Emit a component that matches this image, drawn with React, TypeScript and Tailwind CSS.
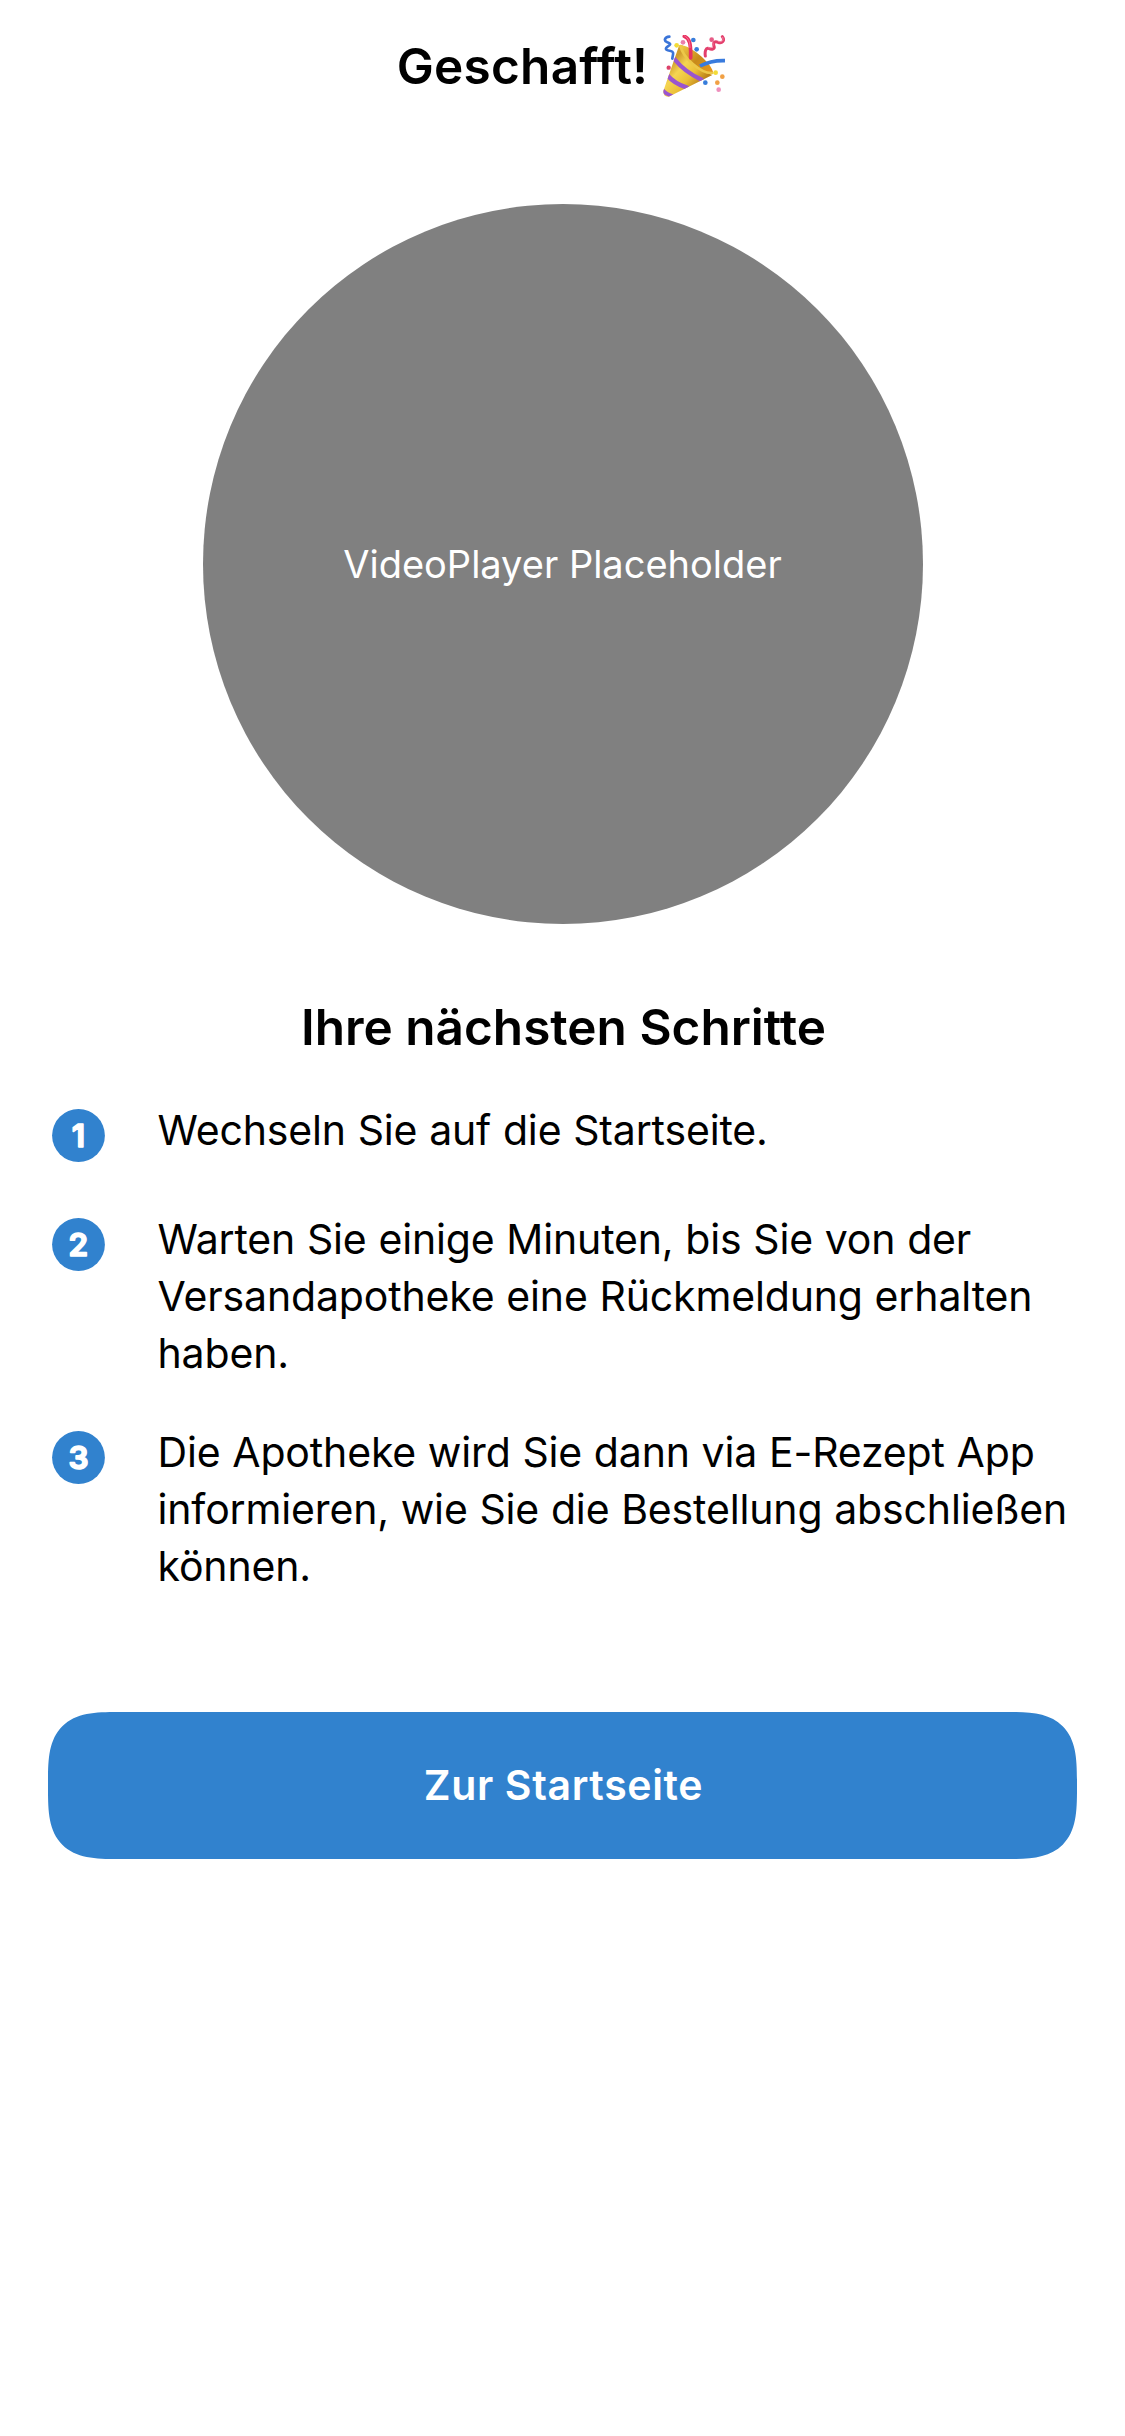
import type { ReactNode } from "react";

function PartyPopper() {
  return (
    <svg viewBox="0 0 186 186" className="size-[62px] shrink-0" fill="none" strokeLinecap="round" role="img" aria-label="Konfetti">
      <defs>
        <linearGradient id="cone" x1="20" y1="90" x2="100" y2="160" gradientUnits="userSpaceOnUse">
          <stop offset="0" stopColor="#cf9c2c" />
          <stop offset="0.3" stopColor="#f5d552" />
          <stop offset="0.65" stopColor="#ebbf38" />
          <stop offset="1" stopColor="#bd8218" />
        </linearGradient>
        <linearGradient id="mouth" x1="60" y1="30" x2="145" y2="115" gradientUnits="userSpaceOnUse">
          <stop offset="0" stopColor="#efc846" />
          <stop offset="0.5" stopColor="#c78a1a" />
          <stop offset="1" stopColor="#e8961c" />
        </linearGradient>
        <clipPath id="coneClip">
          <path d="M48 32 L1 168 Q0 186 17 185 L148 120 Q80 95 58 30 Z" />
        </clipPath>
      </defs>
      <g clipPath="url(#coneClip)">
        <path d="M0 20 H160 V186 H0 Z" fill="url(#cone)" />
        <path d="M34 72 Q66 112 116 134" stroke="#9a55cf" strokeWidth="13" />
        <path d="M12 120 Q34 146 72 158" stroke="#9a55cf" strokeWidth="13" />
        <path d="M-2 164 Q8 178 26 182" stroke="#9a55cf" strokeWidth="11" />
      </g>
      <path d="M50 31 C72 24 142 78 150 110 C152 123 126 119 103 99 C78 79 52 50 50 31 Z" fill="url(#mouth)" />
      <path d="M52 33 C60 67 112 116 148 114" stroke="#edc849" strokeWidth="8" />
      <path d="M19 5 C5 6 1 17 13 22 C27 27 21 30 12 36 C4 44 12 46 23 48 C35 50 29 60 28 71" stroke="#3a74d8" strokeWidth="8" />
      <path d="M64 4 C80 10 84 26 83 69" stroke="#e8325f" strokeWidth="11" />
      <path d="M65 3 C77 9 81 22 81 38" stroke="#f5709a" strokeWidth="3" />
      <path d="M178 5 C187 17 177 27 165 22 C155 18 149 23 153 33 C157 44 145 44 137 40 C128 37 125 50 127 63" stroke="#e33f6c" strokeWidth="9" />
      <path d="M179 7 C183 17 177 23 166 19 M150 24 C151 38 145 39 137 38" stroke="#f890ae" strokeWidth="2.5" />
      <path d="M111 93 C132 82 154 76 186 77" stroke="#397bdd" strokeWidth="11" strokeLinecap="butt" />
      <circle cx="41" cy="31" r="7" fill="#f3dc38" />
      <circle cx="60" cy="22" r="7" fill="#ec7fab" />
      <circle cx="91" cy="15" r="7" fill="#377ddb" />
      <circle cx="101" cy="43" r="7" fill="#377ddb" />
      <circle cx="146" cy="14" r="7" fill="#e65b86" />
      <circle cx="17" cy="98" r="6.5" fill="#dc416a" />
      <circle cx="158" cy="113" r="7" fill="#f3dc38" />
      <circle cx="178" cy="125" r="7" fill="#f1a044" />
      <circle cx="163" cy="143" r="7" fill="#f1a044" />
      <circle cx="127" cy="143" r="7" fill="#377ddb" />
      <circle cx="167" cy="164" r="7" fill="#ee8fbd" />
    </svg>
  );
}

function NumberBadge({ value }: { value: number }) {
  return (
    <svg viewBox="0 0 53 53" className="mt-[7px] size-[53px] shrink-0">
      <circle cx="26.5" cy="26.5" r="26.4" fill="#3182ce" />
      <text
        x="26.4"
        y="37.7"
        textAnchor="middle"
        fill="#fff"
        stroke="#fff"
        strokeWidth="1.6"
        strokeLinejoin="round"
        className="font-['Inter',sans-serif] text-[31.5px] font-semibold"
      >
        {value}
      </text>
    </svg>
  );
}

function Step({ value, children }: { value: number; children: ReactNode }) {
  return (
    <li className="flex min-h-[67px] items-start gap-[52.5px]">
      <NumberBadge value={value} />
      <p className="text-[41px] leading-[57px] tracking-[-0.15px] whitespace-nowrap [word-spacing:0.4px]">{children}</p>
    </li>
  );
}

export default function App() {
  return (
    <main className="flex min-h-[2436px] w-[1125px] flex-col bg-white font-['Inter',sans-serif] text-black">
      <header className="mt-9 flex h-[60px] items-start justify-center gap-[15px] pr-[3px]">
        <h1 className="text-[49.5px] leading-[60px] font-semibold tracking-[0.25px]">Geschafft!</h1>
        <div className="-mt-px">
          <PartyPopper />
        </div>
      </header>

      <div className="mt-[108px] flex size-[720px] items-center justify-center self-center rounded-full bg-[#808080]">
        <span className="text-[38px] text-white">VideoPlayer Placeholder</span>
      </div>

      <h2 className="mt-[73px] pl-[2px] text-center text-[49.5px] leading-[60px] font-semibold">Ihre nächsten Schritte</h2>

      <ol className="mt-[45px] flex flex-col gap-[42px] pl-[52px]">
        <Step value={1}>Wechseln Sie auf die Startseite.</Step>
        <Step value={2}>
          Warten Sie einige Minuten, bis Sie von der
          <br />
          Versandapotheke eine Rückmeldung erhalten
          <br />
          haben.
        </Step>
        <Step value={3}>
          Die Apotheke wird Sie dann via E-Rezept App
          <br />
          informieren, wie Sie die Bestellung abschließen
          <br />
          können.
        </Step>
      </ol>

      <button className="mx-12 mt-[117px] flex h-[147px] items-center justify-center rounded-[50px] bg-[#3182ce] pl-[2px] text-[41px] font-semibold tracking-[0.65px] text-white supports-[corner-shape:squircle]:rounded-[70px] supports-[corner-shape:squircle]:[corner-shape:superellipse(1.6)]">
        Zur Startseite
      </button>
    </main>
  );
}
